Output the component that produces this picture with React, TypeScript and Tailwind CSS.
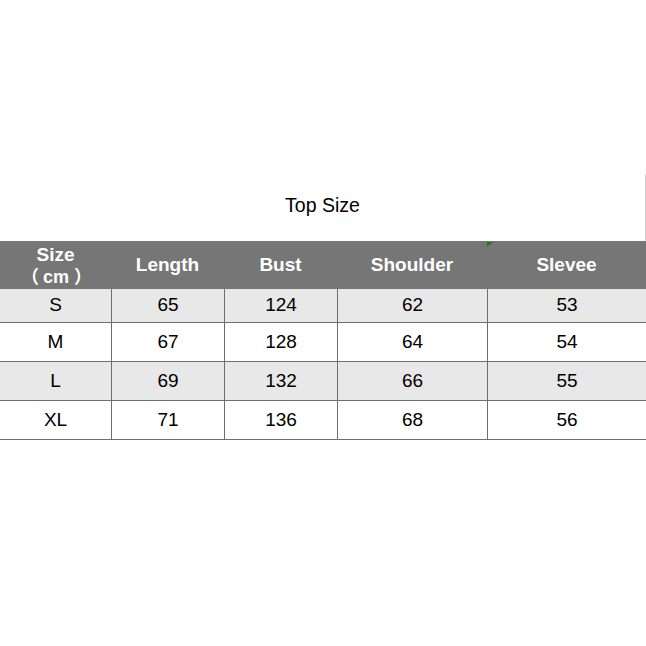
const cols = ["w-[111px]", "w-[113px]", "w-[113px]", "w-[150px]", "w-[159px]"];

const rows = [
  ["S", "65", "124", "62", "53"],
  ["M", "67", "128", "64", "54"],
  ["L", "69", "132", "66", "55"],
  ["XL", "71", "136", "68", "56"],
];

export default function App() {
  return (
    <div className="w-[646px] h-[646px] bg-white overflow-hidden font-['Liberation_Sans','Noto_Sans_CJK_SC',sans-serif] text-black">
      <div className="h-[174px]" />
      <div className="h-[67px] flex items-center justify-center border-r border-[#d4d4d4] pb-[3px]">
        <span className="text-[19.5px]">Top Size</span>
      </div>

      {/* header */}
      <div className="relative flex h-[48px] bg-[#767676] text-white font-bold text-[19px]">
        <div className={`${cols[0]} flex flex-col items-center justify-center leading-[23px] pt-[1px]`}>
          <span>Size</span>
          <span className="text-[18px] pl-[2px]">
            <span className="mr-[4px]">（</span>cm<span className="ml-[5px]">）</span>
          </span>
        </div>
        <div className={`${cols[1]} flex items-center justify-center`}>Length</div>
        <div className={`${cols[2]} flex items-center justify-center`}>Bust</div>
        <div className={`${cols[3]} flex items-center justify-center`}>Shoulder</div>
        <div className={`${cols[4]} flex items-center justify-center`}>Slevee</div>
        <svg className="absolute left-[487px] top-[1px]" width="6" height="5" viewBox="0 0 6 5">
          <polygon points="0,0 6,0 0,5" fill="#1f7a1f" />
        </svg>
      </div>

      {rows.map((r, i) => (
        <div
          key={r[0]}
          className={`flex border-b border-[#6e6e6e] text-[19px] ${i === 0 ? "h-[34px]" : "h-[39px]"} ${i % 2 === 0 ? "bg-[#e8e8e8]" : "bg-white"}`}
        >
          {r.map((c, j) => (
            <div
              key={j}
              className={`${cols[j]} flex items-center justify-center ${j > 0 ? "border-l border-[#6e6e6e]" : ""}`}
            >
              {c}
            </div>
          ))}
        </div>
      ))}
    </div>
  );
}
